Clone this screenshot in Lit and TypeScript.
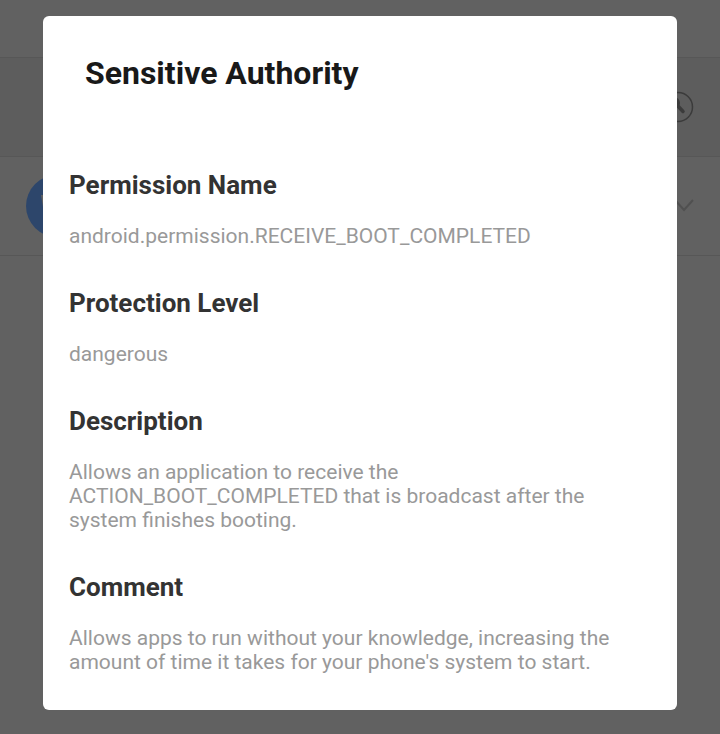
import { LitElement, html, css } from "lit";
import { customElement } from "lit/decorators.js";

const sections = [
  { title: "Permission Name", text: "android.permission.RECEIVE_BOOT_COMPLETED" },
  { title: "Protection Level", text: "dangerous" },
  {
    title: "Description",
    text: "Allows an application to receive the ACTION_BOOT_COMPLETED that is broadcast after the system finishes booting.",
  },
  {
    title: "Comment",
    text: "Allows apps to run without your knowledge, increasing the amount of time it takes for your phone's system to start.",
  },
];

@customElement("app-root")
export class AppRoot extends LitElement {
  static styles = css`
    :host {
      display: grid;
      box-sizing: border-box;
      min-height: 100vh;
      background: #616161;
      font-family: Roboto, "Liberation Sans", sans-serif;
    }
    .page,
    .overlay {
      grid-area: 1 / 1;
      min-width: 0;
    }
    .bar {
      height: 57px;
    }
    .row {
      display: flex;
      align-items: center;
      justify-content: space-between;
      box-sizing: border-box;
      height: 99px;
      padding: 0 26px;
      border-top: 1px solid #575757;
    }
    .row.head {
      justify-content: flex-end;
      background: #5d5d5d;
    }
    .row.app {
      border-bottom: 1px solid #575757;
      height: 100px;
    }
    svg {
      display: block;
    }
    .overlay {
      z-index: 1;
      padding: 16px 43px 24px;
    }
    .dialog {
      box-sizing: border-box;
      padding: 36px 26px;
      border-radius: 6px;
      background: #fff;
    }
    h1 {
      margin: 0 16px 75px;
      font-size: 32px;
      line-height: 42px;
      font-weight: 700;
      color: #191919;
    }
    section + section {
      margin-top: 39px;
    }
    h2 {
      margin: 0 0 23px;
      font-size: 26px;
      line-height: 32px;
      font-weight: 700;
      color: #333;
    }
    p {
      margin: 0;
      font-size: 21px;
      line-height: 24px;
      color: #999;
    }
  `;

  render() {
    return html`
      <div class="page" aria-hidden="true">
        <div class="bar"></div>
        <div class="row head">
          <svg width="32" height="32" viewBox="0 0 32 32" fill="none" stroke="#3b3b3b">
            <circle cx="16" cy="16" r="14.5" stroke-width="1.5" />
            <circle cx="12" cy="12" r="6" fill="#3b3b3b" stroke="none" />
            <path d="M15 14l6 6.500" stroke-width="3.500" stroke-linecap="round" />
          </svg>
        </div>
        <div class="row app">
          <svg width="62" height="62" viewBox="0 0 62 62">
            <circle cx="31" cy="31" r="31" fill="#2d466b" />
            <path d="M15 20h32v24H19z" fill="#616161" />
          </svg>
          <svg width="20" height="16" viewBox="0 0 20 16" fill="none" stroke="#505050" stroke-width="2">
            <path d="M1 2l9 10 9-10" />
          </svg>
        </div>
      </div>
      <div class="overlay">
        <div class="dialog" role="dialog" aria-modal="true" aria-labelledby="dialog-title">
          <h1 id="dialog-title">Sensitive Authority</h1>
          ${sections.map((s) => html`<section><h2>${s.title}</h2><p>${s.text}</p></section>`)}
        </div>
      </div>
    `;
  }
}
